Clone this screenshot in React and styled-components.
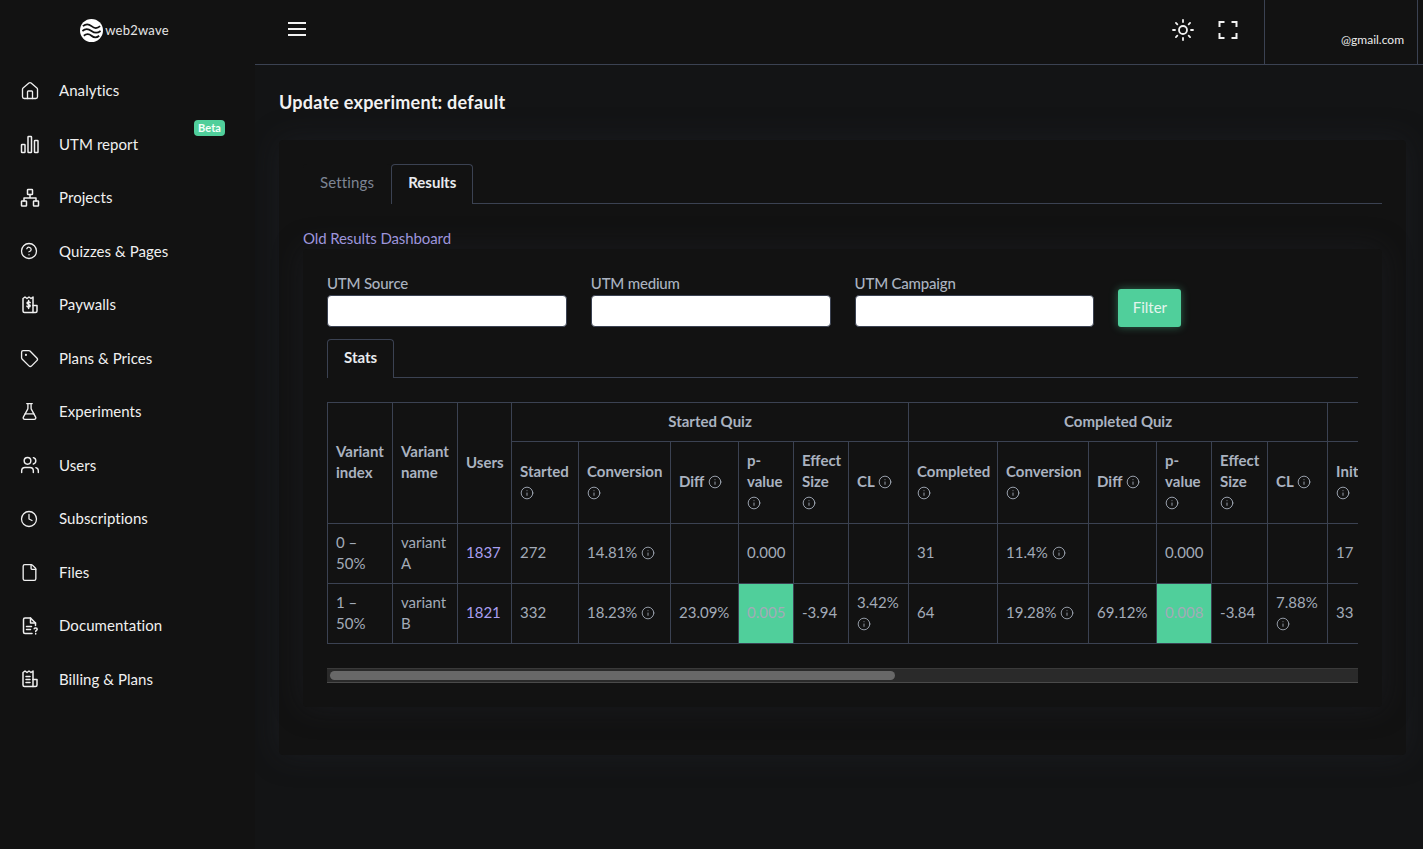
import styled, { createGlobalStyle } from 'styled-components';
import { CircleHelp, Clock, File, FlaskConical, House, Info, Sun, Tag, Users } from 'lucide-react';

const GlobalStyle = createGlobalStyle`
  html, body {
    margin: 0;
    height: 100%;
    background: #121212;
    font-family: Lato, "Noto Sans", sans-serif;
    font-size: 15px;
    line-height: 21px;
    overflow: hidden;
  }
  * {
    box-sizing: border-box;
  }
`;

const BarsIcon = () => (
  <NavSvg viewBox="0 0 20 20">
    <rect x="1.5" y="10.5" width="3.5" height="8" rx="0.6" />
    <rect x="8" y="2.5" width="3.5" height="16" rx="0.6" />
    <rect x="14.5" y="6.5" width="3.5" height="12" rx="0.6" />
  </NavSvg>
);

const SitemapIcon = () => (
  <NavSvg viewBox="0 0 20 20">
    <rect x="7.5" y="1.5" width="5" height="5" rx="0.6" />
    <rect x="1.5" y="13" width="5" height="5" rx="0.6" />
    <rect x="13.5" y="13" width="5" height="5" rx="0.6" />
    <path d="M10 6.5V10M4 13v-3h12v3" />
  </NavSvg>
);

const ReceiptShape = () => (
  <>
    <path d="M3 3.5 5 2l2 1.5L9 2l2 1.5L13 2v15.5H4.5A1.5 1.5 0 0 1 3 16z" />
    <path d="M13 10.5h4V16a1.5 1.5 0 0 1-1.5 1.5H13" />
  </>
);

const ReceiptMoneyIcon = () => (
  <NavSvg viewBox="0 0 20 20">
    <ReceiptShape />
    <path d="M10.2 7.6c-.5-.9-3.2-1-3.2.5s3.2 1 3.2 2.6-2.8 1.4-3.3.4M8.6 5.6v8" />
  </NavSvg>
);

const ReceiptListIcon = () => (
  <NavSvg viewBox="0 0 20 20">
    <ReceiptShape />
    <path d="M6 7.500h4M6 10.500h4M6 13.500h4" />
  </NavSvg>
);

const DocQuestionIcon = () => (
  <NavSvg viewBox="0 0 20 20">
    <path d="M12 17.500H5A1.500 1.500 0 0 1 3.500 16V3.500A1.500 1.500 0 0 1 5 2h5.500l5 5v2.500" />
    <path d="M10.500 2v5h5M6.500 10.500h5M6.500 13.500h4" />
    <path d="M14.200 12.800c.4-1 3-1 3 .5 0 1.200-1.500 1.100-1.500 2.200M15.700 17.600v.4" />
  </NavSvg>
);

const navItems = [
  { label: 'Analytics', icon: <House size={20} strokeWidth={1.6} /> },
  { label: 'UTM report', icon: <BarsIcon />, beta: true },
  { label: 'Projects', icon: <SitemapIcon /> },
  { label: 'Quizzes & Pages', icon: <CircleHelp size={18} strokeWidth={1.7} /> },
  { label: 'Paywalls', icon: <ReceiptMoneyIcon /> },
  { label: 'Plans & Prices', icon: <Tag size={19} strokeWidth={1.7} /> },
  { label: 'Experiments', icon: <FlaskConical size={19} strokeWidth={1.7} /> },
  { label: 'Users', icon: <Users size={20} strokeWidth={1.7} /> },
  { label: 'Subscriptions', icon: <Clock size={18} strokeWidth={1.7} /> },
  { label: 'Files', icon: <File size={19} strokeWidth={1.7} /> },
  { label: 'Documentation', icon: <DocQuestionIcon /> },
  { label: 'Billing & Plans', icon: <ReceiptListIcon /> },
];

const columnWidths = [65, 65, 54, 67, 92, 68, 55, 55, 60, 89, 91, 68, 55, 56, 60, 100];

const headCells = [
  { label: 'Started', stacked: true },
  { label: 'Conversion', stacked: true },
  { label: 'Diff' },
  { label: 'p-value', stacked: true },
  { label: 'Effect Size', stacked: true },
  { label: 'CL' },
  { label: 'Completed', stacked: true },
  { label: 'Conversion', stacked: true },
  { label: 'Diff' },
  { label: 'p-value', stacked: true },
  { label: 'Effect Size', stacked: true },
  { label: 'CL' },
  { label: 'Initiated', stacked: true },
];

const rows = [
  {
    index: '0 – 50%',
    name: 'variant A',
    users: '1837',
    cells: ['272', '14.81%', '', '0.000', '', '', '31', '11.4%', '', '0.000', '', '', '17'],
  },
  {
    index: '1 – 50%',
    name: 'variant B',
    users: '1821',
    cells: ['332', '18.23%', '23.09%', '0.005', '-3.94', '3.42%', '64', '19.28%', '69.12%', '0.008', '-3.84', '7.88%', '33'],
  },
];

// columns whose value carries an info icon
const infoColumns = [1, 5, 7, 11];
const pValueColumns = [3, 9];

function InfoMark({ $block }) {
  return (
    <InfoWrap $block={$block}>
      <Info size={14} strokeWidth={1.5} />
    </InfoWrap>
  );
}

export default function App() {
  return (
    <Page>
      <GlobalStyle />
      <Sidebar>
        <Logo>
          <svg width="23" height="23" viewBox="0 0 24 24">
            <circle cx="12" cy="12" r="12" fill="#fff" />
            <path
              d="M3 7.500c3-2.600 6-2.600 9 0s6 2.600 9 0M2.500 12.500c3-2.600 6-2.600 9.500 0s6 2.600 9.500 0M4 17.500c2.600-2.300 5.300-2.300 8 0s5.400 2.300 8 0"
              fill="none"
              stroke="#121212"
              strokeWidth="1.800"
            />
          </svg>
          <LogoText>web2wave</LogoText>
        </Logo>
        <NavList>
          {navItems.map((item) => (
            <NavItem key={item.label}>
              <NavIcon>{item.icon}</NavIcon>
              {item.label}
              {item.beta && <BetaBadge>Beta</BetaBadge>}
            </NavItem>
          ))}
        </NavList>
      </Sidebar>

      <Main>
        <Header>
          <MenuButton>
            <svg width="18" height="14" viewBox="0 0 18 14" fill="none" stroke="#f2f2f2" strokeWidth="2">
              <path d="M0 1h18M0 7h18M0 13h18" />
            </svg>
          </MenuButton>
          <HeaderTools>
            <Sun size={24} strokeWidth={1.800} color="#f2f2f2" />
            <svg width="20" height="18" viewBox="0 0 20 18" fill="none" stroke="#f2f2f2" strokeWidth="2">
              <path d="M1.500 6V1h5M13.500 1h5v5M18.500 12v5h-5M6.500 17h-5v-5" />
            </svg>
          </HeaderTools>
          <UserBox>@gmail.com</UserBox>
        </Header>

        <Content>
          <Title>Update experiment: default</Title>
          <Card>
            <TabBar>
              <Tab>Settings</Tab>
              <Tab $active>Results</Tab>
            </TabBar>
            <OldLink>Old Results Dashboard</OldLink>
            <InnerCard>
              <FilterRow>
                <Field>
                  <FieldLabel>UTM Source</FieldLabel>
                  <FieldInput />
                </Field>
                <Field>
                  <FieldLabel>UTM medium</FieldLabel>
                  <FieldInput />
                </Field>
                <Field>
                  <FieldLabel>UTM Campaign</FieldLabel>
                  <FieldInput />
                </Field>
                <FilterButton>Filter</FilterButton>
              </FilterRow>
              <StatsTabBar>
                <Tab $active>Stats</Tab>
              </StatsTabBar>
              <TableClip>
                <StatsTable>
                  <colgroup>
                    {columnWidths.map((width, i) => (
                      <col key={i} width={width} />
                    ))}
                  </colgroup>
                  <thead>
                    <GroupRow>
                      <Th rowSpan={2}>Variant index</Th>
                      <Th rowSpan={2}>Variant name</Th>
                      <Th rowSpan={2}>Users</Th>
                      <Th colSpan={6} $center>Started Quiz</Th>
                      <Th colSpan={6} $center>Completed Quiz</Th>
                      <Th />
                    </GroupRow>
                    <HeadRow>
                      {headCells.map((cell, i) => (
                        <Th key={i}>
                          {cell.label} <InfoMark $block={cell.stacked} />
                        </Th>
                      ))}
                    </HeadRow>
                  </thead>
                  <tbody>
                    {rows.map((row) => (
                      <BodyRow key={row.index}>
                        <Td>{row.index}</Td>
                        <Td>{row.name}</Td>
                        <Td><UserLink>{row.users}</UserLink></Td>
                        {row.cells.map((value, i) => (
                          <Td key={i} $good={row.users === '1821' && pValueColumns.includes(i)}>
                            {value}
                            {value && infoColumns.includes(i) && (
                              <>
                                {' '}
                                <InfoMark $block={i === 5 || i === 11} />
                              </>
                            )}
                          </Td>
                        ))}
                      </BodyRow>
                    ))}
                  </tbody>
                </StatsTable>
              </TableClip>
              <ScrollTrack>
                <ScrollThumb />
              </ScrollTrack>
            </InnerCard>
          </Card>
        </Content>
      </Main>
    </Page>
  );
}

const Page = styled.div`
  display: grid;
  grid-template-columns: 255px 1fr;
  height: 100vh;
  background: #121212;
`;

const Sidebar = styled.aside`
  background: #121212;
  box-shadow: 1px 0 0 #16181b;
`;

const Logo = styled.div`
  height: 64px;
  padding: 0 6px 4px 0;
  display: flex;
  align-items: center;
  justify-content: center;
  gap: 2px;
`;

const LogoText = styled.span`
  color: #e6e6e6;
  font-size: 13px;
  letter-spacing: 0.25px;
`;

const NavList = styled.nav`
  display: grid;
  grid-auto-rows: 53.5px;
`;

const NavItem = styled.div`
  position: relative;
  display: flex;
  align-items: center;
  padding-left: 20px;
  color: #f0f0f0;
  font-size: 15px;
  letter-spacing: 0.06px;
`;

const NavIcon = styled.span`
  width: 39px;
  display: flex;
  color: #f0f0f0;
`;

const NavSvg = styled.svg`
  width: 20px;
  height: 20px;
  fill: none;
  stroke: currentColor;
  stroke-width: 1.5;
  stroke-linejoin: round;
  stroke-linecap: round;
`;

const BetaBadge = styled.span`
  position: absolute;
  left: 194px;
  top: 2px;
  width: 31px;
  height: 16px;
  border-radius: 4px;
  background: #50cf9b;
  color: #f4fff9;
  font-size: 11px;
  font-weight: 700;
  line-height: 15px;
  text-align: center;
`;

const Main = styled.main`
  min-width: 0;
  overflow: hidden;
  background: #131415;
`;

const Header = styled.header`
  height: 65px;
  display: flex;
  align-items: stretch;
  padding-right: 5px;
  background: #121212;
  border-bottom: 1px solid #3b4252;
`;

const MenuButton = styled.div`
  display: flex;
  align-items: center;
  padding: 0 0 6px 33px;
`;

const HeaderTools = styled.div`
  margin-left: auto;
  display: flex;
  align-items: center;
  gap: 23px;
  padding: 0 26px 5px 0;
`;

const UserBox = styled.div`
  width: 154px;
  display: flex;
  justify-content: flex-end;
  align-items: flex-end;
  padding: 0 13px 14px 0;
  border-left: 1px solid #3b4252;
  border-right: 1px solid #3b4252;
  color: #ececec;
  font-size: 12px;
`;

const Content = styled.div`
  padding: 24px 17px 0 24px;
`;

const Title = styled.h1`
  margin: 0 0 24px;
  color: #f2f2f2;
  font-size: 18px;
  font-weight: 700;
  line-height: 27px;
  letter-spacing: 0.24px;
`;

const Card = styled.section`
  padding: 24px;
  background: #121212;
  border-radius: 4px;
  box-shadow: 0 0 30px rgba(40, 44, 54, 0.35);
`;

const TabBar = styled.div`
  display: flex;
  height: 40px;
  border-bottom: 1px solid #3b4252;
`;

const StatsTabBar = styled(TabBar)`
  height: 39px;
  margin-top: 12px;
`;

const Tab = styled.div`
  padding: 7px 16px 0;
  margin-bottom: -1px;
  color: ${(props) => (props.$active ? '#e9ebef' : '#7d8594')};
  font-weight: ${(props) => (props.$active ? 700 : 400)};
  letter-spacing: ${(props) => (props.$active ? '0' : '0.15px')};
  background: #121212;
  border: 1px solid ${(props) => (props.$active ? '#3b4252' : 'transparent')};
  border-bottom: none;
  border-radius: 4px 4px 0 0;
`;

const OldLink = styled.a`
  display: block;
  margin: 24px 0 1px;
  color: #9e95dc;
  line-height: 20px;
  letter-spacing: -0.1px;
`;

const InnerCard = styled.div`
  padding: 24px;
  margin-bottom: 24px;
  background: #121212;
  border-radius: 4px;
  box-shadow: 0 0 30px rgba(40, 44, 54, 0.35);
`;

const FilterRow = styled.div`
  display: flex;
  align-items: flex-end;
  gap: 24px;
`;

const Field = styled.label`
  display: block;
  width: 239.8px;
`;

const FieldLabel = styled.div`
  margin-bottom: 2px;
  color: #aab2c0;
  font-weight: 500;
  line-height: 20px;
  letter-spacing: -0.2px;
`;

const FieldInput = styled.input`
  display: block;
  width: 100%;
  height: 32px;
  background: #fff;
  border: 1px solid #3b4252;
  border-radius: 4px;
`;

const FilterButton = styled.button`
  width: 63px;
  height: 38px;
  padding: 0 0 2px;
  background: #50cf9b;
  color: #e4f5ee;
  font: inherit;
  border: none;
  border-radius: 3px;
  box-shadow: 0 0 8px rgba(80, 207, 155, 0.45);
`;

const TableClip = styled.div`
  margin-top: 24px;
  overflow: hidden;
`;

const StatsTable = styled.table`
  width: 1100px;
  table-layout: fixed;
  border-collapse: collapse;
`;

const ScrollTrack = styled.div`
  height: 15px;
  margin-top: 24px;
  padding: 2px 3px;
  background: #2a2a2a;
  border-top: 1px solid #3a3a3a;
  border-bottom: 1px solid #4a4a4a;
`;

const ScrollThumb = styled.div`
  width: 565px;
  height: 9px;
  background: #686868;
  border-radius: 5px;
`;

const GroupRow = styled.tr`
  height: 39px;
`;

const HeadRow = styled.tr`
  height: 82px;
`;

const BodyRow = styled.tr`
  height: 60px;
`;

const Th = styled.th`
  padding: 0 8px 2px;
  border: 1px solid #3b4252;
  color: #aab2c0;
  font-weight: 700;
  text-align: ${(props) => (props.$center ? 'center' : 'left')};
  white-space: normal;
`;

const Td = styled.td`
  padding: 0 8px 2px;
  border: 1px solid #3b4252;
  color: #a3abb8;
  background: ${(props) => (props.$good ? '#50cf9b' : 'transparent')};
`;

const UserLink = styled.a`
  color: #a99ff0;
`;

const InfoWrap = styled.span`
  display: ${(props) => (props.$block ? 'block' : 'inline')};
  height: ${(props) => (props.$block ? '21px' : 'auto')};
  font-weight: 400;

  svg {
    vertical-align: -2px;
  }
`;
